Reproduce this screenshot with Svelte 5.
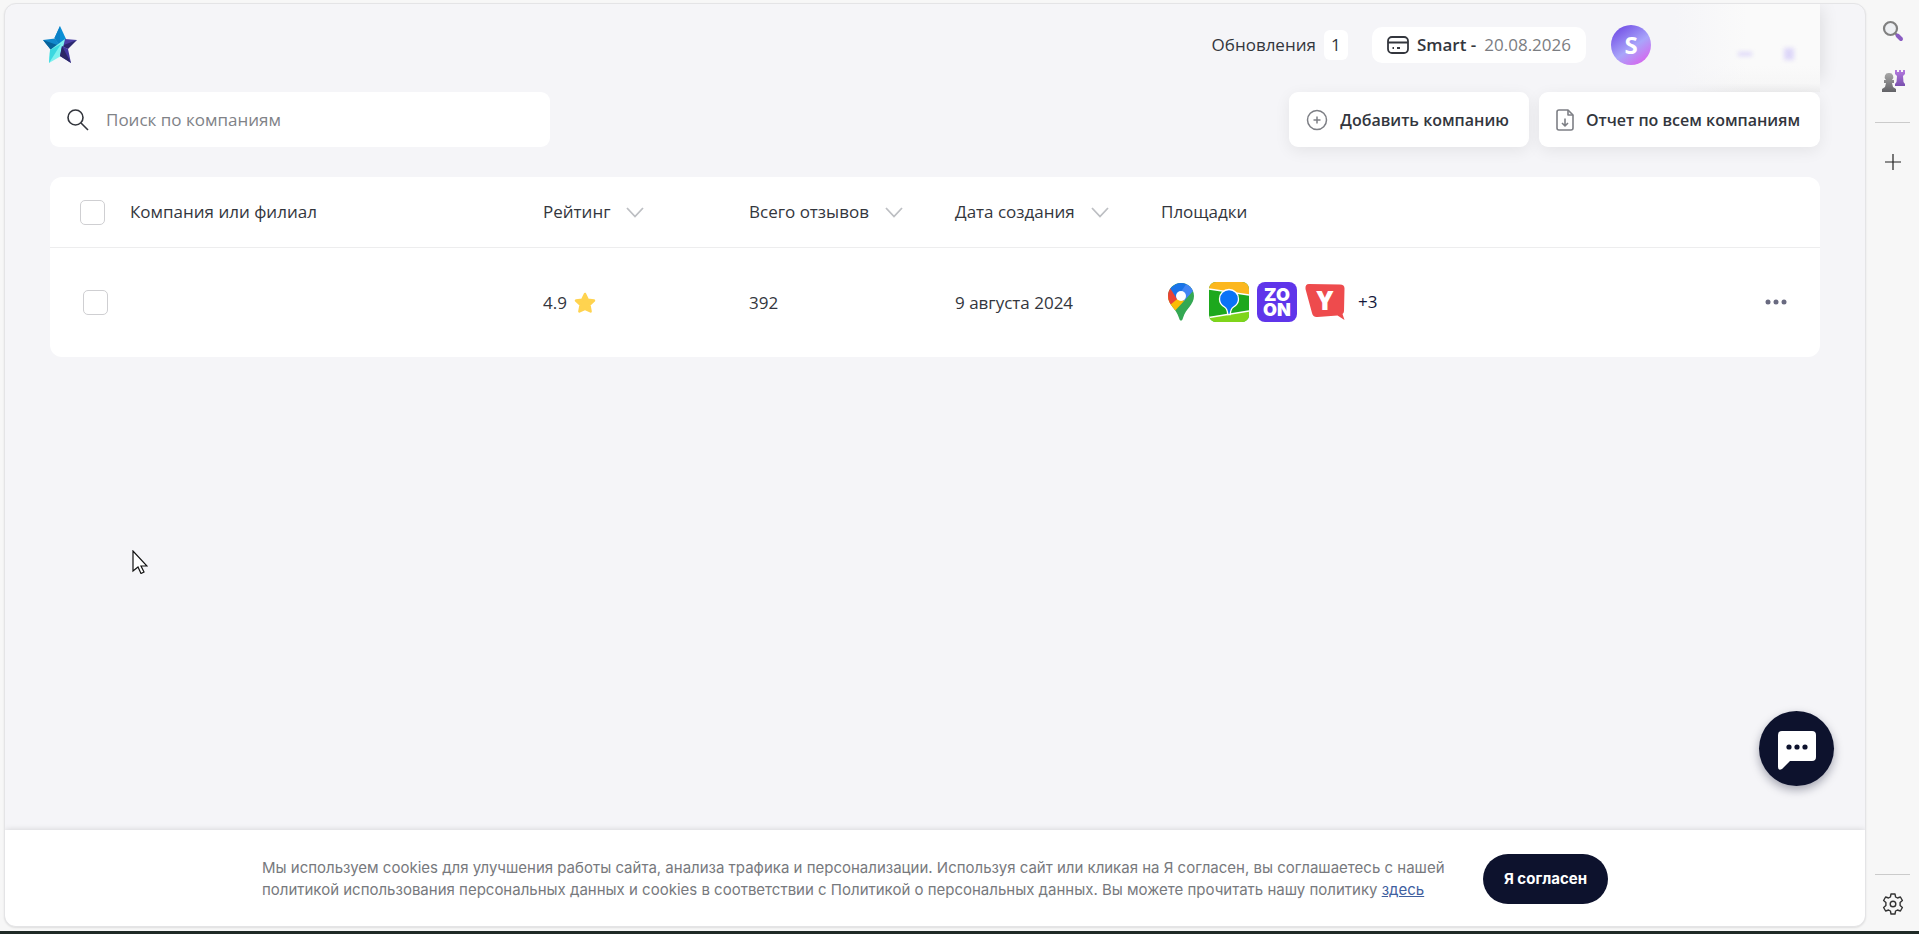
<script lang="ts">
  let search = $state('');
  let allChecked = $state(false);
  let cookiesVisible = $state(true);

  const columns = [
    { title: 'Рейтинг', sortable: true },
    { title: 'Всего отзывов', sortable: true },
    { title: 'Дата создания', sortable: true },
    { title: 'Площадки', sortable: false },
  ];

  const companies = $state([
    { rating: '4.9', reviews: 392, created: '9 августа 2024', more: 3, checked: false },
  ]);

  function toggleAll() {
    companies.forEach(c => (c.checked = allChecked));
  }
</script>

<div class="shell">
  <div class="panel">
    <header class="header">
      <a class="logo" href="/" aria-label="Главная">
        <svg width="36" height="38" viewBox="0 0 36 38">
          <path d="M18 0l-5.500 12L18 21l6-8z" fill="#0a8fd6" />
          <path d="M18 0l-5.500 12L18 20z" fill="#0a80c6" />
          <path d="M1 14l12-1.500 5 7.500-9 4z" fill="#1188cc" />
          <path d="M1 14l17 6-9 4z" fill="#06629b" />
          <path d="M23 13l12 1-11 7-4-1z" fill="#4a3fa5" />
          <path d="M35 14l-9 9-7-3z" fill="#2c2870" />
          <path d="M23 13L8 24 7 37l12-7z" fill="#7df1ee" />
          <path d="M19 18L8 24 7 37z" fill="#3bd8e0" />
          <path d="M20 20l6 3 3 14-11-7z" fill="#4238a0" />
          <path d="M20 20l-2 10 11 7z" fill="#2b2766" />
        </svg>
      </a>
      <a class="updates" href="/updates">Обновления <span class="count">1</span></a>
      <button class="plan">
        <svg width="22" height="18" viewBox="0 0 22 18" fill="none" stroke="#33363d" stroke-width="1.800">
          <rect x="1" y="1" width="20" height="16" rx="4" />
          <path d="M1 6.500h20" />
          <path d="M5.500 12H7M10 12h3" />
        </svg>
        <b>Smart -</b>
        <span>20.08.2026</span>
      </button>
      <button class="avatar">S</button>
      <div class="account"><i></i><i></i></div>
    </header>

    <main class="content">
      <div class="toolbar">
        <label class="search">
          <svg width="22" height="22" viewBox="0 0 22 22" fill="none" stroke="#33363d" stroke-width="1.600">
            <circle cx="8.500" cy="8.500" r="7.500" />
            <path d="M14 14l7 7" />
          </svg>
          <input type="text" bind:value={search} placeholder="Поиск по компаниям" aria-label="Поиск по компаниям" />
        </label>
        <button class="action">
          <svg width="22" height="22" viewBox="0 0 22 22" fill="none" stroke="#7d7f85" stroke-width="1.500">
            <circle cx="11" cy="11" r="9.500" />
            <path d="M11 7.500v7M7.500 11h7" />
          </svg>
          Добавить компанию
        </button>
        <button class="action">
          <svg width="18" height="22" viewBox="0 0 18 22" fill="none" stroke="#7d7f85" stroke-width="1.600" stroke-linejoin="round">
            <path d="M12 1H3a2 2 0 0 0-2 2v16a2 2 0 0 0 2 2h12a2 2 0 0 0 2-2V6z" />
            <path d="M12 1v5h5M9 9.500v7M6 14l3 3 3-3" />
          </svg>
          Отчет по всем компаниям
        </button>
      </div>

      <table class="companies">
        <thead>
          <tr>
            <th class="name">
              <div class="cell">
                <input type="checkbox" bind:checked={allChecked} onchange={toggleAll} aria-label="Выбрать все" />
                Компания или филиал
              </div>
            </th>
            {#each columns as column}
              <th>
                {#if column.sortable}
                  <button class="sort">
                    {column.title}
                    <svg width="18" height="11" viewBox="0 0 18 11" fill="none" stroke="#bdbfc3" stroke-width="1.800">
                      <path d="M1 1l8 8.500L17 1" />
                    </svg>
                  </button>
                {:else}
                  {column.title}
                {/if}
              </th>
            {/each}
          </tr>
        </thead>
        <tbody>
          {#each companies as company}
            <tr>
              <td class="name">
                <div class="cell">
                  <input type="checkbox" bind:checked={company.checked} aria-label="Выбрать компанию" />
                </div>
              </td>
              <td>
                <div class="rating">
                  {company.rating}
                  <svg width="22" height="22" viewBox="0 0 22 22">
                    <path
                      d="M11 2l2.800 5.800 6.200.8-4.600 4.300 1.200 6.500L11 16.800l-5.600 2.600 1.200-6.500L2 8.600l6.200-.8z"
                      fill="#ffd34f"
                      stroke="#ffd34f"
                      stroke-width="2.500"
                      stroke-linejoin="round"
                    />
                  </svg>
                </div>
              </td>
              <td>{company.reviews}</td>
              <td>{company.created}</td>
              <td>
                <div class="platforms">
                  <svg width="40" height="40" viewBox="0 0 40 40">
                    <defs>
                      <clipPath id="pin">
                        <path d="M20 1C12.500 1 7 6.700 7 14c0 9 8 12 11 22 .6 2 1 2.500 2 2.500s1.400-.5 2-2.500c3-10 11-13 11-22C33 6.700 27.500 1 20 1z" />
                      </clipPath>
                    </defs>
                    <g clip-path="url(#pin)">
                      <path d="M0 0h40v40H0z" fill="#34a853" />
                      <path d="M0 18l16-8 8 8-13 14z" fill="#fbbc04" />
                      <path d="M4 6l5 0 11 8-11 9-6-3z" fill="#ea4335" />
                      <path d="M9 6L22 -3l4 7-10 13z" fill="#1a73e8" />
                      <path d="M26 1l8 6-11 12-6-5z" fill="#4285f4" />
                    </g>
                    <circle cx="20" cy="14" r="5" fill="#fff" />
                  </svg>
                  <svg width="40" height="40" viewBox="0 0 40 40">
                    <defs><clipPath id="tile"><rect width="40" height="40" rx="7" /></clipPath></defs>
                    <g clip-path="url(#tile)">
                      <path d="M0 0h40v40H0z" fill="#1da81d" />
                      <path d="M0 0h40v13L0 7z" fill="#fcb71e" />
                      <path d="M0 35l40-6v11H0z" fill="#7fd51a" />
                      <path d="M0 7l40 6M0 35.500L40 29" stroke="#fff" stroke-width="1.300" />
                      <path
                        d="M20 7.500A9.500 9.500 0 0 0 10.500 17c0 4 2.500 6.500 5 8 2.300 1.400 3 3 3.200 7.500h2.600c.2-4.500.9-6.100 3.200-7.500 2.500-1.500 5-4 5-8A9.500 9.500 0 0 0 20 7.500z"
                        fill="#0a73f7"
                        stroke="#fff"
                        stroke-width="1.300"
                      />
                    </g>
                  </svg>
                  <svg width="40" height="40" viewBox="0 0 40 40">
                    <rect width="40" height="40" rx="8" fill="#5f35ea" />
                    <g class="zoon" text-anchor="middle">
                      <text x="20" y="19">ZO</text>
                      <text x="20" y="34">ON</text>
                    </g>
                  </svg>
                  <svg width="40" height="40" viewBox="0 0 40 40">
                    <path d="M4 2l31 .5q4.500 0 4.500 4L39 29q0 2-1.500 3l2 6-7-4.500-20 1.500Q8 35.500 7 31L.5 7Q0 2 4 2z" fill="#ee4b4d" />
                    <text class="yell" x="20" y="28" text-anchor="middle">Y</text>
                  </svg>
                  <span class="more">+{company.more}</span>
                  <button class="menu" aria-label="Действия">
                    <svg width="22" height="6" viewBox="0 0 22 6" fill="#696a80">
                      <circle cx="3" cy="3" r="2.500" />
                      <circle cx="11" cy="3" r="2.500" />
                      <circle cx="19" cy="3" r="2.500" />
                    </svg>
                  </button>
                </div>
              </td>
            </tr>
          {/each}
        </tbody>
      </table>
    </main>

    {#if cookiesVisible}
      <div class="cookies">
        <p>
          Мы используем cookies для улучшения работы сайта, анализа трафика и персонализации. Используя сайт или кликая на Я согласен, вы соглашаетесь с нашей политикой использования персональных данных и cookies в соответствии с Политикой о персональных данных. Вы можете прочитать нашу политику <a href="/policy">здесь</a>
        </p>
        <button onclick={() => (cookiesVisible = false)}>Я согласен</button>
      </div>
    {/if}

    <button class="chat" aria-label="Чат">
      <svg width="38" height="39" viewBox="0 0 38 39">
        <path d="M4 0h30a4 4 0 0 1 4 4v22a4 4 0 0 1-4 4H12l-8 8q-4 2-4-2V4a4 4 0 0 1 4-4z" fill="#fff" />
        <g fill="#0d122d">
          <circle cx="11" cy="16" r="2.600" />
          <circle cx="19" cy="16" r="2.600" />
          <circle cx="27" cy="16" r="2.600" />
        </g>
      </svg>
    </button>
  </div>

  <aside class="sidebar">
    <button aria-label="Поиск">
      <svg width="22" height="22" viewBox="0 0 22 22" fill="none">
        <path d="M13 13l3 3" stroke="#777" stroke-width="2" />
        <circle cx="8.500" cy="8.500" r="6.500" fill="#eef0f3" stroke="#808080" stroke-width="2.200" />
        <path d="M15.500 15.500l3.500 3.500" stroke="#8a5cc2" stroke-width="4" stroke-linecap="round" />
      </svg>
    </button>
    <button aria-label="Игры">
      <svg width="24" height="24" viewBox="0 0 24 24">
        <defs>
          <linearGradient id="pawn" x2="0" y2="1"><stop stop-color="#a8a8a8" /><stop offset="1" stop-color="#626266" /></linearGradient>
          <linearGradient id="rook" x2="0" y2="1"><stop stop-color="#b57ae0" /><stop offset="1" stop-color="#7950ae" /></linearGradient>
        </defs>
        <path d="M14 1h2v2h2V1h2v2h2V1h2v4l-2 2 .5 6 1.500 2v2H14v-2l1.500-2 .5-6-2-2z" fill="url(#rook)" />
        <path d="M8 4a4 4 0 0 1 3 7h2v3h-2l1 4 3 2v3H1v-3l3-2 1-4H3v-3h2a4 4 0 0 1 3-7z" fill="url(#pawn)" />
      </svg>
    </button>
    <hr />
    <button aria-label="Добавить">
      <svg width="16" height="16" viewBox="0 0 16 16" stroke="#222" stroke-width="1.200">
        <path d="M8 0v16M0 8h16" />
      </svg>
    </button>
    <div class="spacer"></div>
    <hr />
    <button aria-label="Настройки">
      <svg width="22" height="22" viewBox="0 0 22 22" fill="none" stroke="#333" stroke-width="1.400" stroke-linejoin="round">
        <path d="M9 1h4l.6 3 1.800 1 3-1 2 3.500-2.300 2v3l2.300 2-2 3.500-3-1-1.800 1L13 21H9l-.6-3-1.800-1-3 1-2-3.500 2.300-2v-3l-2.300-2 2-3.500 3 1 1.800-1z" />
        <circle cx="11" cy="11" r="2.800" />
      </svg>
    </button>
  </aside>
</div>

<svg class="cursor" width="16" height="24" viewBox="0 0 16 24" fill="#fff" stroke="#111" stroke-width="1.200">
  <path d="M1 1v20l5-4 3 6.500 3-1.500-3-6h6z" />
</svg>

<style>
  :global(body) {
    margin: 0;
    background: #f7f7f7;
  }
  .shell {
    box-sizing: border-box;
    display: flex;
    min-height: 100vh;
    padding: 3px 0 4px 4px;
    border-bottom: 3px solid #1f2a26;
    background: #f7f7f7;
    color: #33363d;
    font-family: 'Open Sans', 'Noto Sans', sans-serif;
    font-size: 17px;
    line-height: 24px;
  }
  .shell * {
    box-sizing: border-box;
  }
  button {
    padding: 0;
    border: 0;
    background: none;
    color: inherit;
    font: inherit;
    cursor: pointer;
  }
  a {
    color: inherit;
    text-decoration: none;
  }
  svg {
    display: block;
    flex: none;
  }
  .panel {
    position: relative;
    flex: 1;
    min-width: 0;
    display: flex;
    flex-direction: column;
    border: 1px solid #e4e4e6;
    border-radius: 12px;
    background: #f5f5f8;
    box-shadow: 0 1px 2px rgba(0, 0, 0, 0.1);
    overflow: hidden;
  }
  .header {
    display: flex;
    align-items: center;
    height: 88px;
    padding: 0 45px 6px 37px;
  }
  .logo {
    margin-right: auto;
  }
  .updates {
    display: flex;
    align-items: center;
    gap: 8px;
  }
  .count {
    width: 24px;
    line-height: 30px;
    border-radius: 6px;
    background: #fff;
    text-align: center;
  }
  .plan {
    display: flex;
    align-items: center;
    gap: 8px;
    height: 36px;
    margin-left: 24px;
    padding: 0 15px;
    border-radius: 10px;
    background: #fff;
    font-weight: 500;
  }
  .plan b {
    font-weight: 600;
  }
  .plan span {
    color: #7b7d82;
  }
  .avatar {
    width: 40px;
    height: 40px;
    margin-left: 25px;
    border-radius: 50%;
    background: linear-gradient(145deg, #7350e6 10%, #a9a5fa 55%, #d765ee 90%);
    color: #fff;
    font-size: 24px;
    font-weight: 700;
  }
  .account {
    display: flex;
    align-items: center;
    justify-content: flex-end;
    gap: 32px;
    width: 145px;
    height: 88px;
    margin: 0 0 -6px 24px;
    padding: 12px 26px 0 0;
    background:
      linear-gradient(90deg, #f5f5f8, transparent 50%),
      linear-gradient(#fafafa 70%, #f7f7f7 90%, #eeeeef);
    box-shadow: 10px -4px 16px -8px rgba(0, 0, 0, 0.1);
  }
  .account i {
    width: 14px;
    height: 4px;
    background: #ddd7f8;
    filter: blur(2px);
  }
  .account i:last-child {
    height: 12px;
    width: 10px;
  }
  .content {
    flex: 1;
    padding: 0 45px 40px;
  }
  .toolbar {
    display: flex;
    gap: 10px;
    margin-bottom: 30px;
  }
  .search {
    display: flex;
    align-items: center;
    gap: 17px;
    width: 500px;
    height: 55px;
    margin-right: auto;
    padding: 0 17px;
    border-radius: 9px;
    background: #fff;
  }
  .search input {
    flex: 1;
    min-width: 0;
    padding: 0;
    border: 0;
    outline: 0;
    background: none;
    color: inherit;
    font: inherit;
  }
  .search input::placeholder {
    color: #808287;
    opacity: 1;
  }
  .action {
    display: flex;
    align-items: center;
    gap: 12px;
    height: 55px;
    padding: 0 20px 0 17px;
    border-radius: 9px;
    background: #fff;
    box-shadow: 0 4px 16px rgba(0, 0, 0, 0.07);
    font-size: 16px;
    font-weight: 600;
  }
  .companies {
    width: 100%;
    border-collapse: separate;
    border-spacing: 0;
    table-layout: fixed;
    border-radius: 12px;
    background: #fff;
  }
  th,
  td {
    width: 206px;
    padding: 0 0 0 20px;
    text-align: left;
    font-weight: 400;
    white-space: nowrap;
  }
  th:last-child,
  td:last-child {
    width: auto;
  }
  .name {
    width: 473px;
    padding-left: 30px;
  }
  td.name {
    padding-left: 33px;
  }
  th {
    height: 71px;
    border-bottom: 1px solid #ededee;
  }
  td {
    height: 109px;
  }
  .cell {
    display: flex;
    align-items: center;
    gap: 25px;
  }
  .cell input {
    appearance: none;
    width: 25px;
    height: 25px;
    margin: 0;
    border: 1px solid #cfcfd2;
    border-radius: 5px;
    background: #fff;
  }
  .cell input:checked {
    background: #5f35ea;
  }
  .sort {
    display: flex;
    align-items: center;
    gap: 16px;
  }
  .rating {
    display: flex;
    align-items: center;
    gap: 7px;
  }
  .platforms {
    display: flex;
    align-items: center;
    gap: 8px;
    padding: 0 33px 2px 0;
  }
  .zoon {
    fill: #fff;
    font: 900 18px Inter, sans-serif;
  }
  .yell {
    fill: #fff;
    font: 800 26px 'Open Sans', sans-serif;
  }
  .more {
    padding-left: 5px;
    color: #14173a;
  }
  .menu {
    margin-left: auto;
    padding: 10px 0;
  }
  .cookies {
    display: flex;
    align-items: center;
    justify-content: center;
    gap: 34px;
    padding: 24px 40px 22px;
    background: #fff;
    box-shadow: 0 0 6px rgba(0, 0, 0, 0.15);
    color: #77797d;
    font: 15px/22px Inter, sans-serif;
  }
  .cookies p {
    max-width: 1187px;
    margin: 0;
  }
  .cookies a {
    color: #3f609f;
    text-decoration: underline;
  }
  .cookies button {
    height: 50px;
    padding: 0 21px;
    border-radius: 25px;
    background: #0d122d;
    color: #fff;
    font-size: 15px;
    font-weight: 700;
    white-space: nowrap;
  }
  .chat {
    position: absolute;
    right: 31px;
    bottom: 140px;
    display: grid;
    place-items: center;
    width: 75px;
    height: 75px;
    padding-top: 4px;
    border-radius: 50%;
    background: #0d122d;
    box-shadow: 0 4px 10px rgba(13, 18, 45, 0.35);
  }
  .sidebar {
    display: flex;
    flex-direction: column;
    align-items: center;
    width: 53px;
    padding: 7px 0 2px;
  }
  .sidebar button {
    display: grid;
    place-items: center;
    width: 42px;
    height: 42px;
    margin-bottom: 8px;
  }
  .sidebar hr {
    width: 35px;
    margin: 12px 0 18px;
    border: 0;
    border-top: 1px solid #cbcbcb;
  }
  .spacer {
    flex: 1;
  }
  .spacer + hr {
    margin-bottom: 8px;
  }
  .spacer ~ button {
    margin: 0;
  }
  .cursor {
    position: absolute;
    top: 550px;
    left: 132px;
    pointer-events: none;
  }
</style>
